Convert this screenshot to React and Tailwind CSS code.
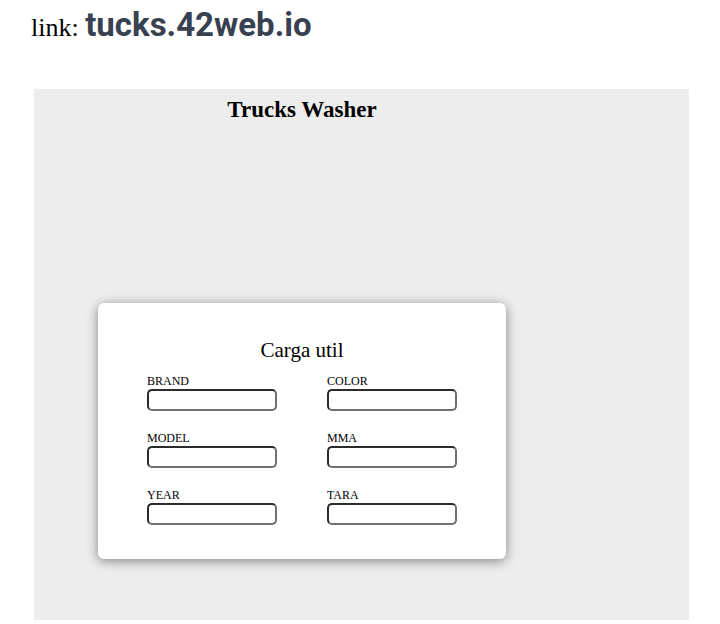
import React from "react";

const fields = [
  ["BRAND", "COLOR"],
  ["MODEL", "MMA"],
  ["YEAR", "TARA"],
];

function Field({ label }) {
  return (
    <div className="flex flex-col">
      <label className="text-[12px] leading-[14px] text-black">{label}</label>
      <input
        type="text"
        className="mt-[1px] w-[130px] h-[22px] rounded-[5px] border-2 border-t-[#2b2b2b] border-l-[#2b2b2b] border-r-[#707070] border-b-[#707070] bg-white outline-none"
      />
    </div>
  );
}

export default function App() {
  return (
    <div className="w-[720px] h-[624px] bg-white font-['Liberation_Serif',serif] overflow-hidden">
      {/* Header link */}
      <div className="pl-[31px] pt-[5px] h-[89px]">
        <span className="text-[26px] text-black leading-[40px]">link: </span>
        <span className="text-[33px] font-bold text-[#374151] font-['Roboto',sans-serif] leading-[40px]">
          tucks.42web.io
        </span>
      </div>

      {/* Panel */}
      <div className="ml-[34px] w-[655px] h-[531px] bg-[#ededed]">
        <div className="ml-[64px] w-[408px] pt-[7px]">
          <h2 className="text-[23px] font-bold text-black text-center leading-[27px]">
            Trucks Washer
          </h2>

          <div className="mt-[180px] bg-white rounded-[6px] shadow-[0_2px_12px_rgba(0,0,0,0.45)] h-[256px] px-[49px] pt-[33px]">
            <h3 className="text-[21px] text-black text-center leading-[28px] mb-[10px]">
              Carga util
            </h3>
            <div className="flex flex-col gap-[20px]">
              {fields.map(([a, b]) => (
                <div key={a} className="flex justify-between">
                  <Field label={a} />
                  <Field label={b} />
                </div>
              ))}
            </div>
          </div>
        </div>
      </div>
    </div>
  );
}
